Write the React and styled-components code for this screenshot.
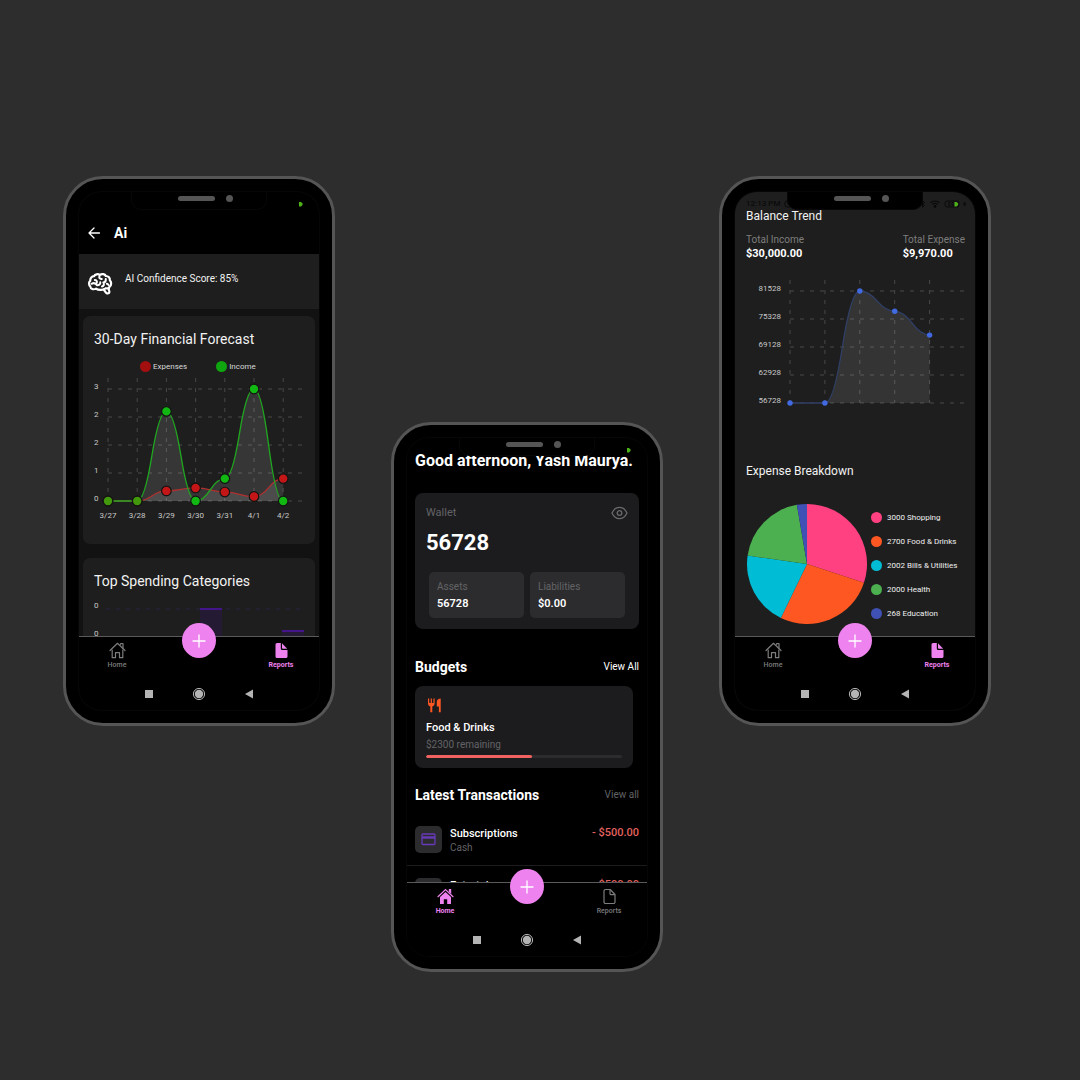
import React from "react";
import styled, { createGlobalStyle } from "styled-components";

const GlobalStyle = createGlobalStyle`
  *, *::before, *::after { box-sizing: border-box; }
  body {
    margin: 0;
    background: #2d2d2d;
    font-family: Roboto, "Noto Sans", sans-serif;
    color: #fff;
  }
  h1, h2, h3, p, ul, dl, dd { margin: 0; padding: 0; }
  ul { list-style: none; }
  button { font: inherit; color: inherit; background: none; border: 0; padding: 0; cursor: pointer; }
  a { color: inherit; text-decoration: none; }
  svg { display: block; }
`;

const Stage = styled.main`
  display: flex;
  justify-content: center;
  align-items: flex-start;
  gap: 56px;
  min-height: 100vh;
  padding: 176px 26px 109px 0;
`;

/* ---------- phone shell ---------- */

const Frame = styled.section`
  flex: none;
  padding: 13px;
  border: 3px solid #555;
  border-radius: 40px;
  background: #000;
  margin-top: ${(p) => (p.$lowered ? "246px" : "0")};
`;

const Screen = styled.div`
  position: relative;
  display: flex;
  flex-direction: column;
  width: 240px;
  height: 518px;
  overflow: hidden;
  border-radius: 22px;
  background: ${(p) => p.$bg};
  box-shadow: 0 0 0 1px #060606;
`;

const Notch = styled.div`
  position: absolute;
  z-index: 2;
  top: 0;
  left: 52px;
  right: 52px;
  height: 18px;
  display: flex;
  justify-content: flex-end;
  align-items: center;
  gap: 11px;
  padding: 0 33px 4px 0;
  border: solid #070707;
  border-width: 0 1px 1px;
  border-radius: 0 0 10px 10px;
  background: #000;
`;

const Speaker = styled.span`
  width: 37px;
  height: 5px;
  border-radius: 3px;
  background: #555;
`;

const Camera = styled.span`
  width: 7px;
  height: 7px;
  border-radius: 50%;
  background: #555;
`;

const StatusBar = styled.div`
  position: absolute;
  z-index: 1;
  top: 7px;
  left: 11px;
  right: 7px;
  display: flex;
  justify-content: space-between;
  align-items: center;
  height: 10px;
  font-size: 8px;
  font-weight: 500;
  line-height: 10px;
  color: #0a0a0a;
`;

const StatusIcons = styled.div`
  display: flex;
  align-items: center;
  gap: 4px;
`;

const StatusDot = styled.span`
  padding: 1px 9px 0 0;
`;

const Content = styled.div`
  flex: 1;
  min-height: 0;
  overflow: hidden;
`;

const NavBar = styled.nav`
  position: relative;
  display: flex;
  justify-content: space-between;
  height: 36px;
  padding: 5px 13px 0;
  border-top: 1px solid #5a5a5a;
  background: #000;
`;

const NavItem = styled.a`
  display: flex;
  flex-direction: column;
  align-items: center;
  gap: 2px;
  width: 50px;
  font-size: 7px;
  line-height: 8px;
  font-weight: ${(p) => (p.$active ? 700 : 500)};
  color: ${(p) => (p.$active ? "#ee82ee" : "#7d7d7d")};
`;

const AddButton = styled.button`
  position: absolute;
  top: -14px;
  left: calc(50% - 17px);
  display: grid;
  place-items: center;
  width: 34px;
  height: 35px;
  border-radius: 50%;
  background: #ee82ee;
`;

const SystemBar = styled.div`
  display: flex;
  justify-content: center;
  align-items: center;
  gap: 36px;
  height: 38px;
  padding-top: 6px;
  background: #000;
`;

const SystemButton = styled.button`
  display: grid;
  place-items: center;
  width: 14px;
  height: 14px;
`;

/* ---------- assistant screen ---------- */

const Header = styled.header`
  display: flex;
  align-items: center;
  gap: 13px;
  height: 62px;
  padding: 20px 8px 0;
  background: #000;
`;

const HeaderTitle = styled.h1`
  font-size: 14px;
  line-height: 16px;
  font-weight: 700;
`;

const ScoreBand = styled.div`
  display: flex;
  gap: 12px;
  height: 55px;
  padding: 17px 8px 0;
  background: #1e1e1e;
`;

const ScoreText = styled.p`
  font-size: 10px;
  line-height: 15px;
  color: #f2f2f2;
`;

const ReportCards = styled.div`
  display: flex;
  flex-direction: column;
  gap: 14px;
  padding: 7px 4px 0;
`;

const ReportCard = styled.article`
  height: 228px;
  padding: 15px 11px 0;
  border-radius: 7px;
  background: #1e1e1e;
`;

const CardTitle = styled.h2`
  font-size: 14px;
  line-height: 16px;
  font-weight: 400;
  color: #f2f2f2;
`;

const ForecastLegend = styled.ul`
  display: flex;
  gap: 29px;
  padding: 14px 0 0 46px;
  font-size: 8px;
  line-height: 11px;
  color: #d8d8d8;
`;

const LegendItem = styled.li`
  display: flex;
  align-items: center;
  gap: ${(p) => p.$gap}px;
`;

const Dot = styled.span`
  width: 11px;
  height: 11px;
  border-radius: 50%;
  background: ${(p) => p.$color};
`;

const ChartText = styled.text`
  font-family: Roboto, "Noto Sans", sans-serif;
  font-size: 8px;
  fill: #c8c8c8;
`;

/* ---------- wallet screen ---------- */

const HomeBody = styled.div`
  padding: 13px 8px 0;
`;

const Greeting = styled.h1`
  font-size: 16px;
  line-height: 20px;
  font-weight: 700;
  white-space: nowrap;
`;

const WalletCard = styled.article`
  margin-top: 22px;
  height: 136px;
  padding: 11px;
  border-radius: 8px;
  background: #1c1c1e;
`;

const Row = styled.div`
  display: flex;
  justify-content: space-between;
  align-items: center;
`;

const Muted = styled.p`
  font-size: ${(p) => p.$size || 10}px;
  line-height: ${(p) => p.$line || 14}px;
  color: #636366;
`;

const Balance = styled.p`
  margin-top: 9px;
  font-size: 22px;
  line-height: 26px;
  font-weight: 700;
`;

const Tiles = styled.div`
  display: grid;
  grid-template-columns: 1fr 1fr;
  gap: 6px;
  margin-top: 16px;
  padding: 0 3px;
`;

const Tile = styled.div`
  height: 46px;
  padding: 8px;
  border-radius: 5px;
  background: #2c2c2e;
`;

const TileValue = styled.p`
  font-size: 11px;
  line-height: 20px;
  font-weight: 600;
`;

const SectionHead = styled(Row)`
  margin-top: ${(p) => p.$top}px;
`;

const SectionTitle = styled.h2`
  font-size: 14px;
  line-height: 18px;
  font-weight: 700;
`;

const ViewLink = styled.a`
  font-size: 10px;
  line-height: 14px;
  color: ${(p) => (p.$muted ? "#636366" : "#fff")};
`;

const BudgetCard = styled.article`
  width: 218px;
  height: 82px;
  margin-top: 10px;
  padding: 11px;
  border-radius: 8px;
  background: #1c1c1e;
`;

const BudgetInfo = styled.div`
  padding-top: 8px;
`;

const ItemName = styled.h3`
  font-size: 11px;
  line-height: 14px;
  font-weight: 500;
`;

const Track = styled.div`
  height: 3px;
  border-radius: 2px;
  background: #2c2c2e;
  overflow: hidden;
`;

const Fill = styled.div`
  height: 100%;
  border-radius: 2px;
  background: #f0625f;
`;

const Transactions = styled.ul`
  margin: 10px -8px 0;
`;

const Transaction = styled.li`
  display: flex;
  gap: 8px;
  height: 52px;
  padding: 12px 8px 0;
  border-bottom: 1px solid #1c1c1e;
`;

const TransactionIcon = styled.span`
  display: grid;
  place-items: center;
  width: 27px;
  height: 27px;
  border-radius: 5px;
  background: #2c2c2e;
`;

const TransactionText = styled.div`
  flex: 1;
  padding-top: 1px;
`;

const Amount = styled.p`
  font-size: 11px;
  line-height: 14px;
  font-weight: 500;
  color: #e5625f;
`;

/* ---------- reports screen ---------- */

const ReportBody = styled.div`
  padding: 16px 10px 0 11px;
`;

const ReportTitle = styled.h2`
  font-size: 12px;
  line-height: 16px;
  font-weight: 400;
  color: #f2f2f2;
`;

const Totals = styled.dl`
  display: flex;
  justify-content: space-between;
  margin-top: 9px;
  font-size: 10px;
  line-height: 14px;
`;

const TotalLabel = styled.dt`
  color: #7d7d7d;
`;

const TotalValue = styled.dd`
  font-size: 11px;
  font-weight: 700;
`;

const TrendChart = styled.div`
  margin: 16px 0 54px;
`;

const Breakdown = styled.div`
  display: flex;
  align-items: center;
  gap: 4px;
  padding: 25px 0 0 1px;
`;

const PieLegend = styled.ul`
  display: flex;
  flex-direction: column;
  gap: 13px;
  padding-top: 3px;
  font-size: 8px;
  line-height: 11px;
  white-space: nowrap;
  color: #f0f0f0;
`;

/* ---------- icons ---------- */

const HomeIcon = ({ filled }) =>
  filled ? (
    <svg width="17" height="17" viewBox="0 0 17 17" aria-hidden="true">
      <path d="M8.500 4 3 9V16H6.800V11.200H10.200V16H14V9Z" fill="currentColor" />
      <path d="M1 8.700 8.500 1.500 16 8.700" fill="none" stroke="currentColor" strokeWidth="1.200" strokeLinecap="round" />
      <path d="M11.800 1H14.200V6L11.800 3.800Z" fill="currentColor" />
    </svg>
  ) : (
    <svg width="17" height="17" viewBox="0 0 17 17" fill="none" stroke="currentColor" strokeWidth="1.200" strokeLinejoin="round" strokeLinecap="round" aria-hidden="true">
      <path d="M3.200 8V15.700H6.500V10.700H10.500V15.700H13.800V8" />
      <path d="M1 8.500 8.500 1.300 16 8.500" />
      <path d="M11.700 2.500V1.500H14V6.200" />
    </svg>
  );

const ReportIcon = ({ filled }) =>
  filled ? (
    <svg width="17" height="17" viewBox="0 0 17 17" fill="currentColor" aria-hidden="true">
      <path d="M4 1H7.800V6.500A1.500 1.500 0 0 0 9.300 8H14.500V14.500A1.500 1.500 0 0 1 13 16H4A1.500 1.500 0 0 1 2.500 14.500V2.500A1.500 1.500 0 0 1 4 1Z" />
      <path d="M9 1.300 14.200 6.800H9.800A.8.8 0 0 1 9 6Z" />
    </svg>
  ) : (
    <svg width="17" height="17" viewBox="0 0 17 17" fill="none" stroke="currentColor" strokeWidth="1.200" strokeLinejoin="round" aria-hidden="true">
      <path d="M4.500 1.500H9.200L14 6.500V14A1.500 1.500 0 0 1 12.500 15.500H4.500A1.500 1.500 0 0 1 3 14V3A1.500 1.500 0 0 1 4.500 1.500Z" />
      <path d="M9 1.700V5.500A1.200 1.200 0 0 0 10.200 6.700H13.800" />
    </svg>
  );

const PlusIcon = () => (
  <svg width="14" height="14" viewBox="0 0 14 14" stroke="#fff" strokeWidth="1.300" strokeLinecap="round" aria-hidden="true">
    <path d="M7 1V13M1 7H13" />
  </svg>
);

const BackIcon = () => (
  <svg width="14" height="14" viewBox="0 0 14 14" fill="none" stroke="#fff" strokeWidth="1.300" strokeLinecap="round" strokeLinejoin="round" aria-hidden="true">
    <path d="M12.500 7H2M7 2 2 7 7 12" />
  </svg>
);

const BrainIcon = () => (
  <svg width="26" height="24" viewBox="0 0 26 24" fill="none" stroke="#fff" strokeWidth="2.200" strokeLinecap="round" strokeLinejoin="round" aria-hidden="true">
    <path d="M9 17.600C6.500 19 3.500 18 3.300 15.500C1.600 14 1.600 11 3.200 9.800C3 7 5 5.200 7 5.200C8 3.200 11 2.600 12.800 4C14.800 2.400 18 3 18.800 5C21.500 5 23.200 7 22.800 9.200C24.600 11 24.600 14 22.800 15.300C22.500 17 20.500 17.900 18.800 17.200C16.500 19.300 11.500 19.600 9 17.600Z" />
    <path d="M16.800 18.500C18 20.500 18.800 22.500 20.800 22.500C22.600 22.500 22.800 20.500 21.800 19V17" />
    <path d="M12.800 4.500C11.500 6.500 12.500 8.200 14.800 8M7.800 9C9.500 9 10.200 10.200 9.800 11.800M4.500 12.800C7 11.500 9 12.500 10 14.200C12 14.500 13.500 13 13.300 11.300M18.800 8C19 10 18 11.300 16.300 11.500C17.500 13 17 15 15 15.500M19.800 12.800C20.500 13 21 13.300 21.500 14" strokeWidth="2" />
  </svg>
);

const EyeIcon = () => (
  <svg width="17" height="14" viewBox="0 0 17 14" fill="none" stroke="#6a6a6d" strokeWidth="1.300" aria-hidden="true">
    <path d="M1 7C4.500-.5 12.500-.5 16 7C12.500 14.500 4.500 14.500 1 7Z" strokeLinejoin="round" />
    <circle cx="8.500" cy="7" r="2.300" />
  </svg>
);

const FoodIcon = () => (
  <svg width="16" height="16" viewBox="0 0 16 16" fill="#ff5722" aria-hidden="true">
    <path d="M2 1.500H3.200V6H4.700V1.500H5.900V6H7.400V1.500H8.600V6.500C8.600 8.200 7.600 9 6.300 9.400V15.200H4.300V9.400C3 9 2 8.200 2 6.500Z" />
    <path d="M14.700 1.500V15.200H12.900V9.500H10.800V5C10.800 3 12.300 1.500 14.700 1.500Z" />
  </svg>
);

const CardIcon = () => (
  <svg width="15" height="13" viewBox="0 0 15 13" fill="none" stroke="#673ab7" strokeWidth="1.300" aria-hidden="true">
    <rect x="1" y="1" width="13" height="10.500" rx="1" />
    <path d="M1 4.500H14" strokeWidth="2.400" />
  </svg>
);

const RecordingDot = () => (
  <svg width="5" height="5" viewBox="0 0 5 5" aria-hidden="true">
    <path d="M1 0H3L4.500 1.500V3L3 4.500H1Z" fill="#4eb318" />
  </svg>
);

const ClockIcon = () => (
  <svg width="8" height="8" viewBox="0 0 8 8" fill="none" stroke="#0a0a0a" aria-hidden="true">
    <circle cx="4" cy="4" r="3.300" />
    <path d="M4 2V4.500H6" />
  </svg>
);

const BluetoothIcon = () => (
  <svg width="7" height="8" viewBox="0 0 7 8" fill="none" stroke="#0a0a0a" aria-hidden="true">
    <path d="M1 2 5.500 5.500 3.500 7.200V.8L5.500 2.500 1 6" />
  </svg>
);

const WifiIcon = () => (
  <svg width="10" height="8" viewBox="0 0 10 8" fill="none" stroke="#0a0a0a" strokeWidth="1.200" aria-hidden="true">
    <path d="M.5 2.800C3 .4 7 .4 9.500 2.800M2.300 4.600C4 3.200 6 3.200 7.700 4.600" />
    <circle cx="5" cy="6.500" r=".8" fill="#0a0a0a" />
  </svg>
);

const BatteryIcon = () => (
  <svg width="24" height="8" viewBox="0 0 24 8" aria-hidden="true">
    <rect x="1" y="1" width="14" height="6" rx="2" fill="none" stroke="#0a0a0a" />
    <path d="M4 2.500H6V4H4.500V5.500H6.500M8 2.500H10V5.500H8Z" fill="none" stroke="#0a0a0a" strokeWidth=".8" />
    <path d="M10.500 2H12.500L14 3.500V5L12.500 6.500H10.500Z" fill="#4eb318" />
    <path d="M21.500 1 18.500 4.500H20.500L19.500 7.300 22.800 3.600H20.800Z" fill="#0a0a0a" />
  </svg>
);

/* ---------- charts ---------- */

const curve = (pts) =>
  pts.slice(1).reduce((d, [x1, y1], i) => {
    const [x0, y0] = pts[i];
    const mx = (x0 + x1) / 2;
    const my = (y0 + y1) / 2;
    return `${d} Q${(mx + x0) / 2} ${y0} ${mx} ${my} Q${(mx + x1) / 2} ${y1} ${x1} ${y1}`;
  }, `M${pts[0][0]} ${pts[0][1]}`);

const area = (pts, base) =>
  `${curve(pts)} L${pts[pts.length - 1][0]} ${base} L${pts[0][0]} ${base} Z`;

const Grid = ({ left, right, top, base, columns, step }) => (
  <g stroke="#484848" strokeDasharray="4 6">
    {[0, 1, 2, 3, 4].map((i) => {
      const y = base - i * 28;
      return <line key={i} x1={left} x2={right} y1={y} y2={y} />;
    })}
    {Array.from({ length: columns }, (_, i) => {
      const x = left + i * step;
      return <line key={i} x1={x} x2={x} y1={top} y2={base} />;
    })}
  </g>
);

const days = ["3/27", "3/28", "3/29", "3/30", "3/31", "4/1", "4/2"];
const income = [0, 0, 2.4, 0, 0.6, 3, 0];
const expenses = [0, 0, 0.27, 0.35, 0.24, 0.12, 0.6];

const ForecastChart = () => {
  const left = 14;
  const base = 129;
  const step = 29.2;
  const place = (v, i) => [left + i * step, base - (v / 3) * 112];
  const inc = income.map(place);
  const exp = expenses.map(place);
  return (
    <svg width="210" height="152" viewBox="0 0 210 152" role="img" aria-label="Forecast of expenses and income">
      <Grid left={left} right={210} top={6} base={base} columns={7} step={step} />
      <path d={area(exp, base)} fill="#fff" fillOpacity=".11" />
      <path d={area(inc, base)} fill="#fff" fillOpacity=".11" />
      <path d={curve(exp)} fill="none" stroke="#b03030" strokeWidth="1.300" />
      <path d={curve(inc)} fill="none" stroke="#20a820" strokeWidth="1.300" />
      {exp.map(([x, y], i) => (
        <circle key={i} cx={x} cy={y} r="4.800" fill="#c41616" stroke="#141414" strokeWidth="1.200" />
      ))}
      {inc.map(([x, y], i) => (
        <circle key={i} cx={x} cy={y} r="4.800" fill={i < 2 ? "#43990c" : "#12b812"} stroke="#141414" strokeWidth="1.200" />
      ))}
      {["0", "1", "2", "2", "3"].map((t, i) => (
        <ChartText key={i} x="0" y={base - i * 28}>{t}</ChartText>
      ))}
      {days.map((t, i) => (
        <ChartText key={t} x={left + i * step} y="146" textAnchor="middle">{t}</ChartText>
      ))}
    </svg>
  );
};

const CategoryChart = () => (
  <svg width="210" height="60" viewBox="0 0 210 60" role="img" aria-label="Spending by category">
    <path d="M12 20H210" stroke="#2b2144" strokeDasharray="4 6" />
    <rect x="106" y="20" width="22" height="40" fill="#251a33" />
    <rect x="106" y="19" width="22" height="2" fill="#43148a" />
    <rect x="188" y="42" width="22" height="18" fill="#251a33" />
    <rect x="188" y="41" width="22" height="2" fill="#43148a" />
    <ChartText x="0" y="19">0</ChartText>
    <ChartText x="0" y="47">0</ChartText>
  </svg>
);

const balances = [56728, 56728, 81528, 77028, 71758];

const BalanceChart = () => {
  const left = 44;
  const base = 126;
  const step = 34.9;
  const pts = balances.map((v, i) => [left + i * step, base - ((v - 56728) / 24800) * 112]);
  return (
    <svg width="219" height="132" viewBox="0 0 219 132" role="img" aria-label="Balance trend">
      <Grid left={left} right={218} top={3} base={base} columns={5} step={step} />
      <path d={area(pts, base)} fill="#fff" fillOpacity=".1" />
      <path d={curve(pts)} fill="none" stroke="#2f3f66" strokeWidth="1.300" />
      {pts.map(([x, y], i) => (
        <circle key={i} cx={x} cy={y} r="2.700" fill="#4169e1" />
      ))}
      {[56728, 62928, 69128, 75328, 81528].map((t, i) => (
        <ChartText key={t} x="35" y={base - i * 28} textAnchor="end">{t}</ChartText>
      ))}
    </svg>
  );
};

const breakdown = [
  { value: 3000, name: "Shopping", color: "#ff4081" },
  { value: 2700, name: "Food & Drinks", color: "#ff5722" },
  { value: 2002, name: "Bills & Utilities", color: "#00bcd4" },
  { value: 2000, name: "Health", color: "#4caf50" },
  { value: 268, name: "Education", color: "#3f51b5" },
];

const PieChart = () => {
  const total = breakdown.reduce((sum, s) => sum + s.value, 0);
  const point = (v) => {
    const a = (v / total) * Math.PI * 2;
    return `${60 + 60 * Math.sin(a)} ${60 - 60 * Math.cos(a)}`;
  };
  let start = 0;
  return (
    <svg width="120" height="120" viewBox="0 0 120 120" role="img" aria-label="Expense breakdown">
      {breakdown.map((s) => {
        const d = `M60 60 L${point(start)} A60 60 0 0 1 ${point(start + s.value)} Z`;
        start += s.value;
        return <path key={s.name} d={d} fill={s.color} />;
      })}
    </svg>
  );
};

/* ---------- composition ---------- */

const Phone = ({ active, lowered, bg, time, children }) => (
  <Frame $lowered={lowered}>
    <Screen $bg={bg}>
      <Notch>
        <Speaker />
        <Camera />
      </Notch>
      <StatusBar>
        {time ? (
          <>
            <StatusIcons>
              {time}
              <ClockIcon />
            </StatusIcons>
            <StatusIcons>
              <BluetoothIcon />
              <WifiIcon />
              <BatteryIcon />
            </StatusIcons>
          </>
        ) : (
          <>
            <span />
            <StatusDot><RecordingDot /></StatusDot>
          </>
        )}
      </StatusBar>
      <Content>{children}</Content>
      <NavBar>
        <NavItem href="#home" $active={active === "home"}>
          <HomeIcon filled={active === "home"} />
          Home
        </NavItem>
        <AddButton aria-label="Add">
          <PlusIcon />
        </AddButton>
        <NavItem href="#reports" $active={active === "reports"}>
          <ReportIcon filled={active === "reports"} />
          Reports
        </NavItem>
      </NavBar>
      <SystemBar>
        <SystemButton aria-label="Recent apps">
          <svg width="8" height="8" viewBox="0 0 8 8"><rect width="8" height="8" fill="#b4b4b4" /></svg>
        </SystemButton>
        <SystemButton aria-label="Home screen">
          <svg width="14" height="14" viewBox="0 0 14 14">
            <circle cx="7" cy="7" r="5.600" fill="none" stroke="#b4b4b4" />
            <circle cx="7" cy="7" r="4.200" fill="#b4b4b4" />
          </svg>
        </SystemButton>
        <SystemButton aria-label="Back">
          <svg width="8" height="10" viewBox="0 0 8 10"><path d="M8 .5V9.500L0 5Z" fill="#b4b4b4" /></svg>
        </SystemButton>
      </SystemBar>
    </Screen>
  </Frame>
);

const AssistantScreen = () => (
  <Phone active="reports" bg="#121212">
    <Header>
      <button aria-label="Go back"><BackIcon /></button>
      <HeaderTitle>Ai</HeaderTitle>
    </Header>
    <ScoreBand>
      <BrainIcon />
      <ScoreText>AI Confidence Score: 85%</ScoreText>
    </ScoreBand>
    <ReportCards>
      <ReportCard>
        <CardTitle>30-Day Financial Forecast</CardTitle>
        <ForecastLegend>
          <LegendItem $gap={2}><Dot $color="#a30f0f" />Expenses</LegendItem>
          <LegendItem $gap={2}><Dot $color="#0fa50f" />Income</LegendItem>
        </ForecastLegend>
        <ForecastChart />
      </ReportCard>
      <ReportCard>
        <CardTitle>Top Spending Categories</CardTitle>
        <CategoryChart />
      </ReportCard>
    </ReportCards>
  </Phone>
);

const WalletScreen = () => (
  <Phone active="home" lowered bg="#000">
    <HomeBody>
      <Greeting>Good afternoon, Yash Maurya.</Greeting>
      <WalletCard>
        <Row>
          <Muted $size={11} $line={17}>Wallet</Muted>
          <button aria-label="Toggle balance"><EyeIcon /></button>
        </Row>
        <Balance>56728</Balance>
        <Tiles>
          <Tile>
            <Muted>Assets</Muted>
            <TileValue>56728</TileValue>
          </Tile>
          <Tile>
            <Muted>Liabilities</Muted>
            <TileValue>$0.00</TileValue>
          </Tile>
        </Tiles>
      </WalletCard>
      <SectionHead $top={29}>
        <SectionTitle>Budgets</SectionTitle>
        <ViewLink href="#budgets">View All</ViewLink>
      </SectionHead>
      <BudgetCard>
        <FoodIcon />
        <BudgetInfo>
          <ItemName>Food &amp; Drinks</ItemName>
          <Muted $line={20}>$2300 remaining</Muted>
        </BudgetInfo>
        <Track><Fill style={{ width: `${(2700 / 5000) * 100}%` }} /></Track>
      </BudgetCard>
      <SectionHead $top={18}>
        <SectionTitle>Latest Transactions</SectionTitle>
        <ViewLink href="#transactions" $muted>View all</ViewLink>
      </SectionHead>
      <Transactions>
        {["Subscriptions", "Entertainment"].map((name) => (
          <Transaction key={name}>
            <TransactionIcon><CardIcon /></TransactionIcon>
            <TransactionText>
              <ItemName>{name}</ItemName>
              <Muted>Cash</Muted>
            </TransactionText>
            <Amount>- $500.00</Amount>
          </Transaction>
        ))}
      </Transactions>
    </HomeBody>
  </Phone>
);

const ReportsScreen = () => (
  <Phone active="reports" bg="#1e1e1e" time="12:13 PM">
    <ReportBody>
      <ReportTitle>Balance Trend</ReportTitle>
      <Totals>
        <div>
          <TotalLabel>Total Income</TotalLabel>
          <TotalValue>$30,000.00</TotalValue>
        </div>
        <div>
          <TotalLabel>Total Expense</TotalLabel>
          <TotalValue>$9,970.00</TotalValue>
        </div>
      </Totals>
      <TrendChart><BalanceChart /></TrendChart>
      <ReportTitle>Expense Breakdown</ReportTitle>
      <Breakdown>
        <PieChart />
        <PieLegend>
          {breakdown.map((s) => (
            <LegendItem key={s.name} $gap={5}>
              <Dot $color={s.color} />
              {s.value} {s.name}
            </LegendItem>
          ))}
        </PieLegend>
      </Breakdown>
    </ReportBody>
  </Phone>
);

export default function App() {
  return (
    <>
      <GlobalStyle />
      <Stage>
        <AssistantScreen />
        <WalletScreen />
        <ReportsScreen />
      </Stage>
    </>
  );
}
